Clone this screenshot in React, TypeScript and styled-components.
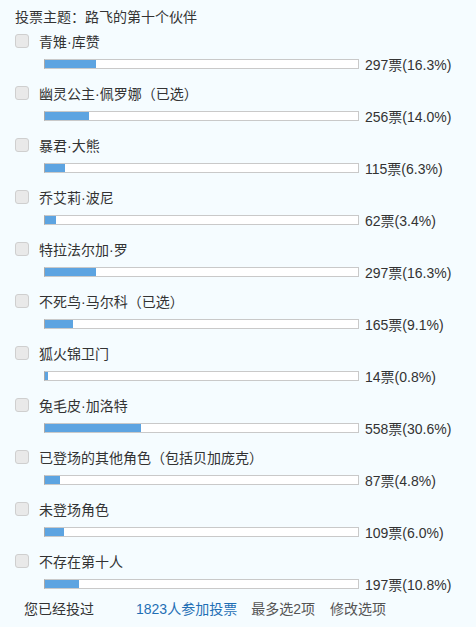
import React from 'react'
import styled, { createGlobalStyle } from 'styled-components';

const GlobalStyle = createGlobalStyle`
  html, body {
    margin: 0;
    padding: 0;
    background: #f5fcff;
  }
  body {
    font-family: "Liberation Sans", "Noto Sans CJK SC", sans-serif;
    font-size: 14px;
    color: #333;
  }
`;

const options = [
  { name: '青雉·库赞', votes: 297, pct: 16.3 },
  { name: '幽灵公主·佩罗娜（已选）', votes: 256, pct: 14.0 },
  { name: '暴君·大熊', votes: 115, pct: 6.3 },
  { name: '乔艾莉·波尼', votes: 62, pct: 3.4 },
  { name: '特拉法尔加·罗', votes: 297, pct: 16.3 },
  { name: '不死鸟·马尔科（已选）', votes: 165, pct: 9.1 },
  { name: '狐火锦卫门', votes: 14, pct: 0.8 },
  { name: '兔毛皮·加洛特', votes: 558, pct: 30.6 },
  { name: '已登场的其他角色（包括贝加庞克）', votes: 87, pct: 4.8 },
  { name: '未登场角色', votes: 109, pct: 6.0 },
  { name: '不存在第十人', votes: 197, pct: 10.8 },
];

const Poll = styled.div`
  padding: 7px 0 0 15px;
  width: 476px;
  box-sizing: border-box;
`;

const Title = styled.div`
  line-height: 20px;
  height: 21px;
`;

const Option = styled.div`
  display: flex;
  flex-direction: column;
  padding-bottom: 6px;
`;

const LabelRow = styled.label`
  display: flex;
  align-items: center;
  height: 26px;
  gap: 10px;
`;

const Check = styled.span`
  width: 12px;
  height: 12px;
  border: 1px solid #cfcfcf;
  border-radius: 3px;
  background: #e9e9e9;
  flex: none;
`;

const BarRow = styled.div`
  display: flex;
  align-items: center;
  height: 20px;
  padding-left: 29px;
  gap: 6px;
`;

const Track = styled.div`
  width: 313px;
  height: 8px;
  border: 1px solid #c9c9c9;
  border-left-color: #a8a8a8;
  background: #fff;
  flex: none;
`;

const Fill = styled.div`
  height: 100%;
  background: #5da4e1;
`;

const Count = styled.span`
  color: #333;
  white-space: nowrap;
`;

const Footer = styled.div`
  display: flex;
  align-items: center;
  height: 16px;
  padding-left: 9px;
`;

const Voted = styled.span`
  color: #333;
  margin-right: 42px;
`;

const Joined = styled.span`
  color: #1f6fb5;
  margin-right: 14px;
`;

const Note = styled.span<{ gap?: number }>`
  color: #555;
  margin-right: ${p => p.gap ?? 0}px;
`;

export default function App() {
  return <>
    <GlobalStyle />
    <Poll>
      <Title>投票主题：路飞的第十个伙伴</Title>
      { options.map(o =>
        <Option key={ o.name }>
          <LabelRow>
            <Check />
            <span>{ o.name }</span>
          </LabelRow>
          <BarRow>
            <Track>
              <Fill style={{ width: `${ Math.max(o.pct, 0.8) }%` }} />
            </Track>
            <Count>{ o.votes }票({ o.pct.toFixed(1) }%)</Count>
          </BarRow>
        </Option>
      ) }
      <Footer>
        <Voted>您已经投过</Voted>
        <Joined>1823人参加投票</Joined>
        <Note gap={ 15 }>最多选2项</Note>
        <Note>修改选项</Note>
      </Footer>
    </Poll>
  </>
}
